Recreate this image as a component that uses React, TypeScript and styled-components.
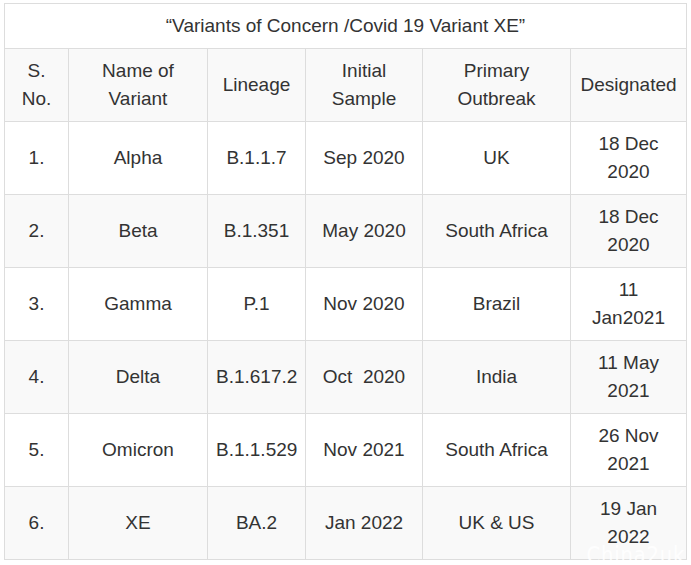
import React from "react";
import styled, { createGlobalStyle } from "styled-components";

const Global = createGlobalStyle`
  html, body { margin: 0; padding: 0; background: #fff; }
  body { font-family: "Liberation Sans", Arial, sans-serif; color: #333; }
`;

const Page = styled.div`
  position: relative;
  width: 691px;
  height: 565px;
  padding: 3px 0 0 4px;
  box-sizing: border-box;
  overflow: hidden;
`;

const Table = styled.table`
  border-collapse: collapse;
  table-layout: fixed;
  width: 682px;
  font-size: 19px;
  line-height: 28px;
`;

const TitleCell = styled.th`
  height: 44px;
  padding: 0 8px;
  border: 1px solid #ddd;
  font-weight: normal;
  text-align: center;
  vertical-align: middle;
  background: #fff;
`;

const Row = styled.tr<{ $shade: boolean }>`
  background: ${(p) => (p.$shade ? "#f9f9f9" : "#fff")};
`;

const Cell = styled.td`
  height: 72px;
  padding: 0 8px;
  border: 1px solid #ddd;
  text-align: center;
  vertical-align: middle;
  font-weight: normal;
`;

const Watermark = styled.div`
  position: absolute;
  right: 6px;
  bottom: -3px;
  font-family: "DejaVu Sans", sans-serif;
  font-size: 23px;
  line-height: 26px;
  color: rgba(255, 255, 255, 0.9);
  letter-spacing: 1px;
  transform: scaleX(0.85);
  transform-origin: right bottom;
  pointer-events: none;
`;

const widths = [64, 139, 98, 117, 148, 116];

const header = [
  ["S.", "No."],
  ["Name of", "Variant"],
  ["Lineage"],
  ["Initial", "Sample"],
  ["Primary", "Outbreak"],
  ["Designated"],
];

const rows: string[][][] = [
  [["1."], ["Alpha"], ["B.1.1.7"], ["Sep 2020"], ["UK"], ["18 Dec", "2020"]],
  [["2."], ["Beta"], ["B.1.351"], ["May 2020"], ["South Africa"], ["18 Dec", "2020"]],
  [["3."], ["Gamma"], ["P.1"], ["Nov 2020"], ["Brazil"], ["11", "Jan2021"]],
  [["4."], ["Delta"], ["B.1.617.2"], ["Oct\u00a0 2020"], ["India"], ["11 May", "2021"]],
  [["5."], ["Omicron"], ["B.1.1.529"], ["Nov 2021"], ["South Africa"], ["26 Nov", "2021"]],
  [["6."], ["XE"], ["BA.2"], ["Jan 2022"], ["UK & US"], ["19 Jan", "2022"]],
];

const Lines = ({ parts }: { parts: string[] }) => (
  <>
    {parts.map((p, i) => (
      <React.Fragment key={i}>
        {i > 0 && <br />}
        {p}
      </React.Fragment>
    ))}
  </>
);

export default function App() {
  return (
    <Page>
      <Global />
      <Table>
        <colgroup>
          {widths.map((w, i) => (
            <col key={i} style={{ width: w }} />
          ))}
        </colgroup>
        <tbody>
          <tr>
            <TitleCell colSpan={6}>
              “Variants of Concern /Covid 19 Variant XE”
            </TitleCell>
          </tr>
          <Row $shade={true}>
            {header.map((h, i) => (
              <Cell key={i}>
                <Lines parts={h} />
              </Cell>
            ))}
          </Row>
          {rows.map((r, ri) => (
            <Row key={ri} $shade={ri % 2 === 1}>
              {r.map((c, ci) => (
                <Cell key={ci}>
                  <Lines parts={c} />
                </Cell>
              ))}
            </Row>
          ))}
        </tbody>
      </Table>
      <Watermark>China2uk</Watermark>
    </Page>
  );
}
